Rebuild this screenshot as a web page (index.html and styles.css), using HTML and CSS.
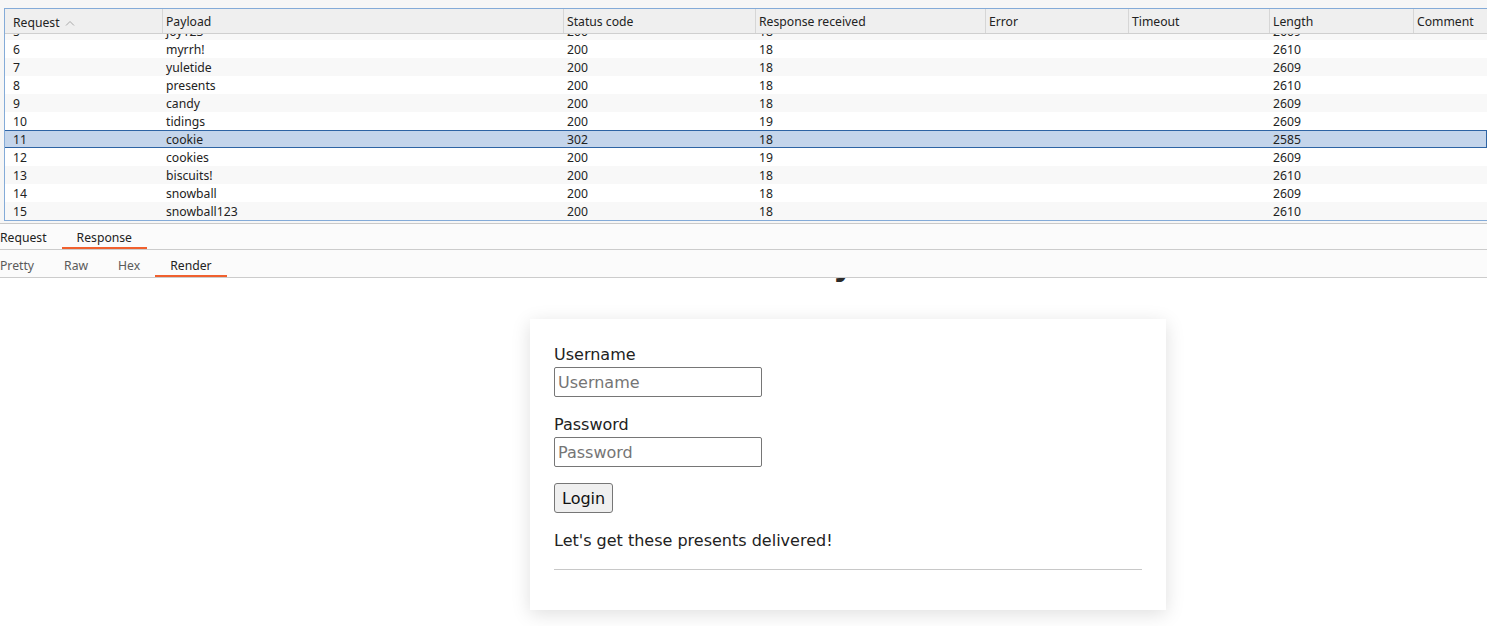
FILE: index.html
```html
<!DOCTYPE html>
<html>
<head>
<meta charset="utf-8">
<link rel="stylesheet" href="styles.css">
</head>
<body>
<div class="top">
  <div class="table">
    <div class="grid head">
      <div class="hc first">Request <span class="sort"><svg width="10" height="6" viewBox="0 0 10 6"><path d="M1 5.5 L5 1.5 L9 5.5" fill="none" stroke="#a8a8a8" stroke-width="1"/></svg></span></div>
      <div class="hc">Payload</div>
      <div class="hc">Status code</div>
      <div class="hc">Response received</div>
      <div class="hc">Error</div>
      <div class="hc">Timeout</div>
      <div class="hc">Length</div>
      <div class="hc last">Comment</div>
    </div>
    <div class="body">
      <div class="rows">
        <div class="grid row odd"><div class="c first">5</div><div class="c">joy123</div><div class="c">200</div><div class="c">18</div><div class="c"></div><div class="c"></div><div class="c">2609</div><div class="c"></div></div>
        <div class="grid row"><div class="c first">6</div><div class="c">myrrh!</div><div class="c">200</div><div class="c">18</div><div class="c"></div><div class="c"></div><div class="c">2610</div><div class="c"></div></div>
        <div class="grid row odd"><div class="c first">7</div><div class="c">yuletide</div><div class="c">200</div><div class="c">18</div><div class="c"></div><div class="c"></div><div class="c">2609</div><div class="c"></div></div>
        <div class="grid row"><div class="c first">8</div><div class="c">presents</div><div class="c">200</div><div class="c">18</div><div class="c"></div><div class="c"></div><div class="c">2610</div><div class="c"></div></div>
        <div class="grid row odd"><div class="c first">9</div><div class="c">candy</div><div class="c">200</div><div class="c">18</div><div class="c"></div><div class="c"></div><div class="c">2609</div><div class="c"></div></div>
        <div class="grid row"><div class="c first">10</div><div class="c">tidings</div><div class="c">200</div><div class="c">19</div><div class="c"></div><div class="c"></div><div class="c">2609</div><div class="c"></div></div>
        <div class="grid row sel"><div class="c first">11</div><div class="c">cookie</div><div class="c">302</div><div class="c">18</div><div class="c"></div><div class="c"></div><div class="c">2585</div><div class="c"></div></div>
        <div class="grid row"><div class="c first">12</div><div class="c">cookies</div><div class="c">200</div><div class="c">19</div><div class="c"></div><div class="c"></div><div class="c">2609</div><div class="c"></div></div>
        <div class="grid row odd"><div class="c first">13</div><div class="c">biscuits!</div><div class="c">200</div><div class="c">18</div><div class="c"></div><div class="c"></div><div class="c">2610</div><div class="c"></div></div>
        <div class="grid row"><div class="c first">14</div><div class="c">snowball</div><div class="c">200</div><div class="c">18</div><div class="c"></div><div class="c"></div><div class="c">2609</div><div class="c"></div></div>
        <div class="grid row odd"><div class="c first">15</div><div class="c">snowball123</div><div class="c">200</div><div class="c">18</div><div class="c"></div><div class="c"></div><div class="c">2610</div><div class="c"></div></div>
      </div>
    </div>
  </div>
</div>
<div class="gap"></div>
<div class="tabs main-tabs">
  <div class="tab">Request</div>
  <div class="tab active">Response</div>
</div>
<div class="tabs sub-tabs">
  <div class="tab">Pretty</div>
  <div class="tab">Raw</div>
  <div class="tab">Hex</div>
  <div class="tab active">Render</div>
</div>
<div class="render">
  <div class="page">
    <h1 class="title">Delivery Admin</h1>
    <div class="card">
      <label class="label">Username</label>
      <input class="field" type="text" placeholder="Username">
      <label class="label second">Password</label>
      <input class="field" type="password" placeholder="Password">
      <button class="btn">Login</button>
      <p class="note">Let's get these presents delivered!</p>
      <hr class="rule">
    </div>
  </div>
</div>
</body>
</html>
```
FILE: styles.css
```css
html, body {
  margin: 0;
  padding: 0;
  background: #ffffff;
  overflow: hidden;
}
body {
  font-family: "Noto Sans", "DejaVu Sans", sans-serif;
  font-size: 12.2px;
  color: #222222;
  width: 1487px;
  height: 626px;
}
.top {
  background: #f6f6f6;
  padding: 8px 0 0 4px;
}
.table {
  border-top: 1px solid #84abd8;
  border-left: 1px solid #84abd8;
  border-bottom: 1px solid #84abd8;
  background: #ffffff;
}
.grid {
  display: grid;
  grid-template-columns: 158px 401px 192px 230px 143px 141px 144px 1fr;
}
.head {
  height: 24px;
  background: #efefef;
  border-bottom: 1px solid #cfcfcf;
}
.hc {
  border-right: 1px solid #d6d6d6;
  padding-left: 3px;
  padding-top: 1px;
  line-height: 23px;
  white-space: nowrap;
  overflow: hidden;
}
.hc.last {
  border-right: none;
}
.hc.first, .c.first {
  padding-left: 8px;
}
.sort {
  display: inline-block;
  margin-left: 2px;
  vertical-align: 1px;
}
.body {
  height: 186px;
  overflow: hidden;
}
.rows {
  margin-top: -12px;
}
.row {
  height: 18px;
  box-sizing: border-box;
}
.row.odd {
  background: #f8f8f8;
}
.row.sel {
  background: #c4d5eb;
  border: 1px solid #2e64a4;
  margin-left: -1px;
}
.c {
  padding-left: 3px;
  padding-top: 1px;
  line-height: 17px;
  white-space: nowrap;
}
.row.sel .c {
  line-height: 15px;
  padding-top: 1px;
}
.row.sel .c.first {
  padding-left: 8px;
}
.gap {
  height: 2px;
  background: #f6f6f6;
  border-bottom: 1px solid #c9c9c9;
}
.tabs {
  display: flex;
  background: #fbfbfb;
  border-bottom: 1px solid #cccccc;
  margin-left: -15px;
}
.main-tabs {
  height: 25px;
}
.sub-tabs {
  height: 27px;
}
.tab {
  padding: 0 15px;
  box-sizing: border-box;
  height: 100%;
  display: flex;
  align-items: center;
  border-bottom: 2px solid transparent;
  padding-top: 3px;
}
.sub-tabs .tab {
  color: #5a5a5a;
  padding-top: 5px;
}
.tab.active {
  border-bottom-color: #f0602e;
  color: #222222;
}
.sub-tabs .tab.active {
  color: #222222;
}
.render {
  height: 348px;
  overflow: hidden;
  background: #ffffff;
  font-family: "DejaVu Sans", sans-serif;
  font-size: 16px;
  color: #222222;
}
.page {
  padding-left: 209px;
  display: flex;
  flex-direction: column;
  align-items: center;
}
.title {
  margin: -32px 12px 0 0;
  font-size: 32px;
  line-height: 37px;
  font-weight: bold;
  color: #2a2a2a;
  height: 37px;
}
.card {
  margin-top: 36px;
  width: 636px;
  box-sizing: border-box;
  padding: 26px 24px 40px 24px;
  background: #ffffff;
  box-shadow: 0 4px 18px rgba(0, 0, 0, 0.13);
  display: flex;
  flex-direction: column;
  align-items: flex-start;
}
.label {
  line-height: 19px;
  display: block;
}
.label.second {
  margin-top: 18px;
}
.field {
  margin-top: 3px;
  width: 208px;
  height: 30px;
  box-sizing: border-box;
  border: 1px solid #767676;
  border-radius: 2px;
  padding: 1px 3px;
  font-family: "DejaVu Sans", sans-serif;
  font-size: 16px;
  color: #222222;
  background: #ffffff;
}
.field::placeholder {
  color: #757575;
}
.btn {
  margin-top: 16px;
  height: 30px;
  padding: 0 7px;
  font-family: "DejaVu Sans", sans-serif;
  font-size: 16px;
  color: #111111;
  background: #efefef;
  border: 1px solid #767676;
  border-radius: 3px;
}
.note {
  margin: 18px 0 0 0;
  line-height: 19px;
}
.rule {
  align-self: stretch;
  margin: 19px 0 0 0;
  border: none;
  border-top: 1px solid #c8c8c8;
  height: 0;
}
```
